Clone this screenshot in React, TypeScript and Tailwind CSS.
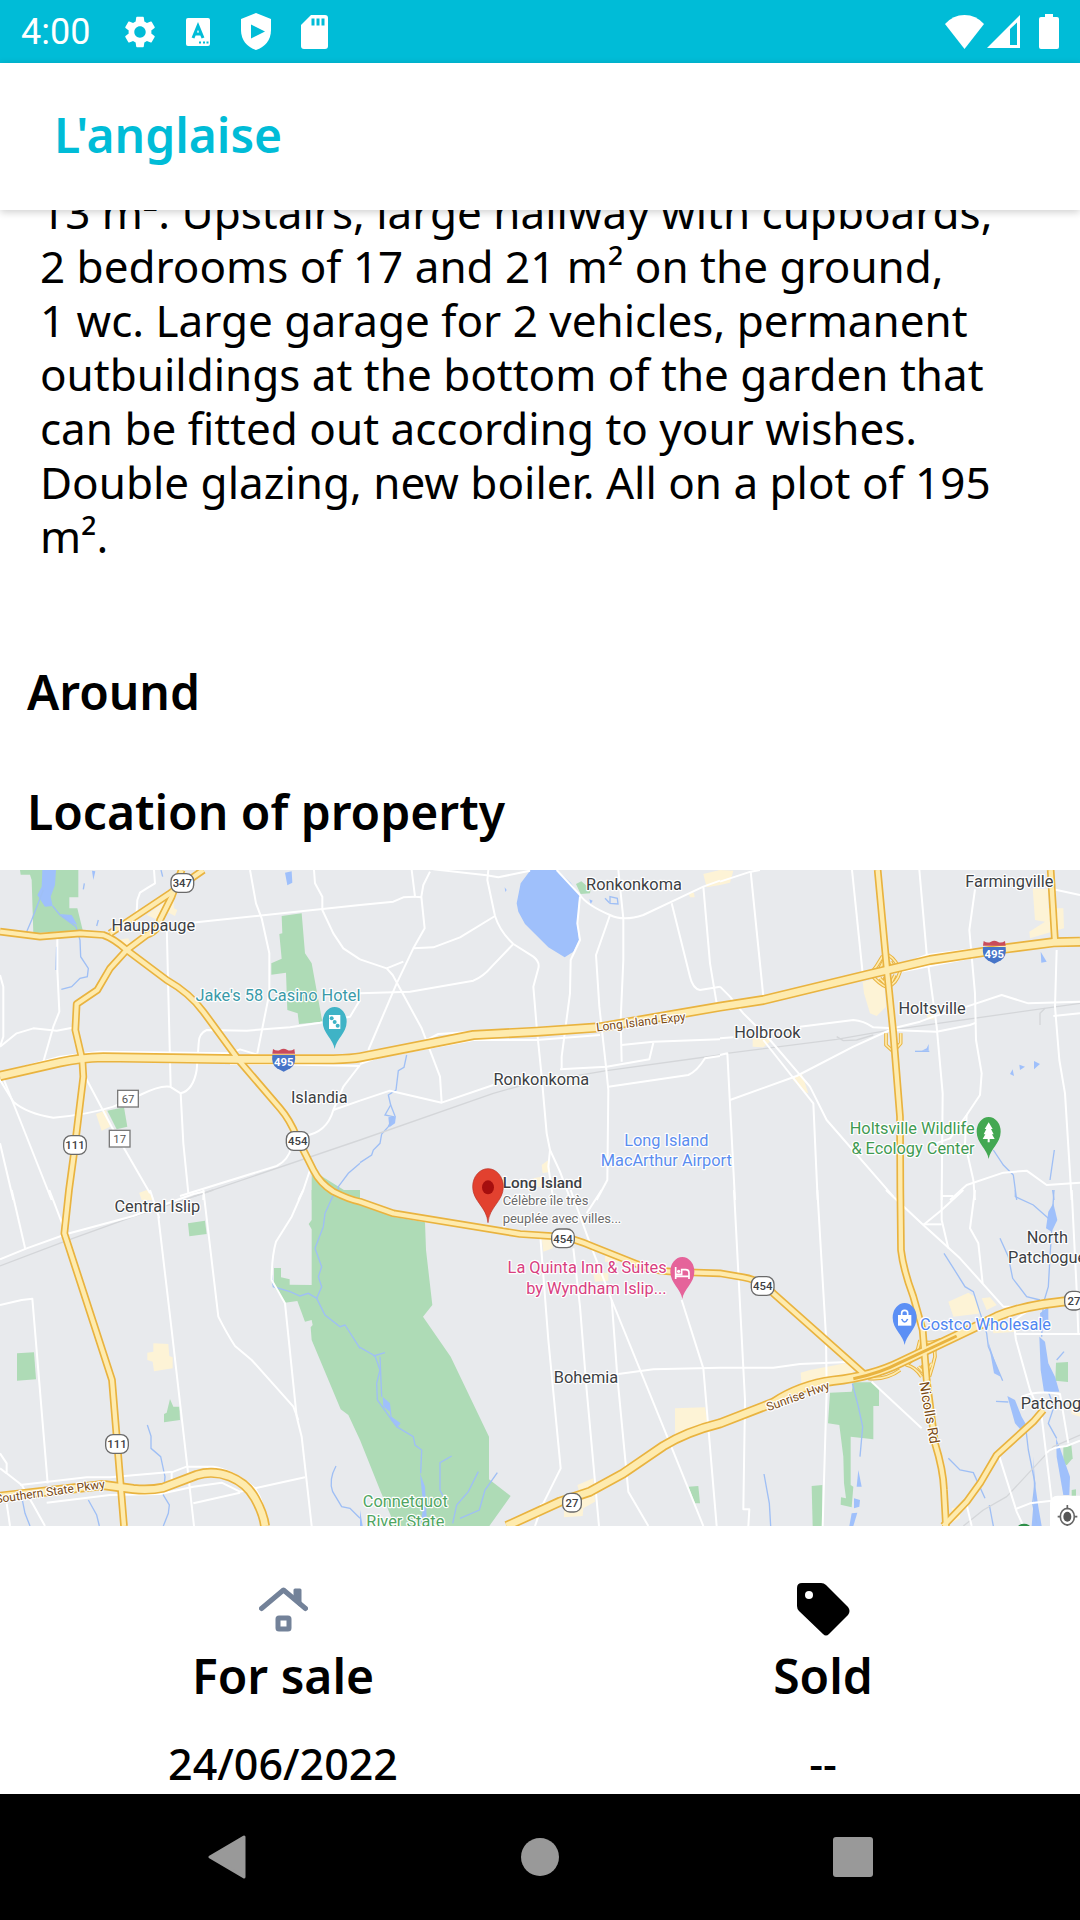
import { MdSettings } from "react-icons/md";

type Tile = {
  dx: number;
  dy: number;
  parks: string[];
  towns: string[];
  water: string[];
  streams: string[];
  rails: string[];
  roads: string[];
};

/* The map is drawn in six tiles; each tile keeps its own local coordinates. */
const tiles: Tile[] = [
  {
    dx: 0,
    dy: -30,
    parks: [
      "M60,30H235V112H208V145H232L248,210L100,220L95,60L90,44L62,44Z",
      "M845,168L905,160L915,280L935,310L967,485L897,492L893,460L862,450L858,338L814,344V310L845,296L838,222L847,220Z",
      "M322,752L372,742L382,800L350,808Z",
      "M935,930L1080,1020H935Z",
    ],
    towns: [
      "M440,165L520,105L522,145L532,150L525,168L500,155L485,185Z",
      "M288,762L318,750L330,800L305,812Z",
      "M418,1000L445,992L460,1020H425Z",
      "M350,240L385,235L400,270L370,285Z",
    ],
    water: [
      "M127,30H168L165,75L152,110L158,138L135,140L112,105L125,80Z",
      "M855,38L875,34L877,68L862,76Z",
      "M180,162L215,165L232,195L205,185Z",
      "M276,32L286,34L280,60Z",
    ],
    streams: [
      "M130,90L95,180L80,215",
      "M158,138L180,165L228,200L240,240L242,290L265,325L262,350L240,355L215,380L184,388",
      "M170,260L168,330",
      "M253,70L250,88",
      "M295,180L290,198",
      "M1080,910L1045,940L1015,980L1010,1020",
      "M483,30L488,50",
    ],
    rails: ["M580,1010L1080,840"],
    roads: [
      "M462,30L465,70L445,82L420,98L412,120L408,190",
      "M500,190L505,400L512,680",
      "M560,190L1080,135",
      "M750,30L768,130L785,175L808,280L808,400L772,580",
      "M942,30L945,70L967,110V150L1000,220L1030,265L1080,298",
      "M172,230V330L178,455L160,500L130,605",
      "M0,560L50,520L100,505L170,512L225,502",
      "M0,345L10,380V530L0,560",
      "M1080,420L1050,470L960,488L870,502L740,512L620,510Q596,520 596,550L590,630Q580,690 542,700L510,680Q480,675 420,705L340,740Q260,765 160,773Q80,760 40,725L0,660",
      "M542,700L550,850L565,1000",
      "M10,655L60,780L155,1020",
      "M0,850L40,1020",
      "M250,640L335,800L450,1000",
      "M540,1008L830,918Q865,900 875,860",
      "M1080,615L1030,680L1000,750Q980,820 910,828",
      "M1000,750L1080,722",
      "M930,930L910,990L895,1020",
      "M0,640L180,590L300,575L690,580L720,568L775,585L1080,585",
      "M690,612L800,612L1080,618",
      "M610,992V1020",
    ],
  },
  {
    dx: 1080,
    dy: -30,
    parks: ["M648,72L664,64L692,88L690,100L662,102Z"],
    towns: ["M1030,42L1080,30V75L1040,82Z", "M985,100L1002,98L1004,112H990Z", "M545,915L565,900L570,935L548,940Z", "M520,955L545,950L545,980L522,980Z"],
    water: [
      "M512,30H590L632,68L658,105L652,190L657,240L640,275L614,292L565,262L495,192L475,155L470,130L482,70Z",
      "M85,772L108,768L105,790L88,802Z",
      "M688,118L698,122L692,132Z",
      "M434,82L440,90L436,96Z",
    ],
    streams: [
      "M140,585L132,622L115,632L108,690L85,705L92,735L75,765L100,770L85,800L65,822L60,850L40,870L35,885L0,908",
      "M92,735L105,768",
      "M750,110L772,115L774,132L750,130Z",
      "M735,115L748,128",
    ],
    rails: ["M0,840L400,700L500,672L740,632L1080,585"],
    roads: [
      "M155,30L165,110L185,112",
      "M0,135L100,125L130,112L165,110",
      "M210,35L190,75L184,110L194,205L160,265L110,370L25,570",
      "M0,298L80,325L98,345L185,505L240,650L245,728",
      "M80,325L130,305",
      "M160,265L220,262L300,232L405,168",
      "M0,400L150,395L340,362Q370,350 395,320L460,252",
      "M220,28L380,46L415,52L510,32",
      "M385,30L382,60L405,168Q420,215 460,252L520,290Q540,305 535,325L520,380L530,500L545,650L560,820L570,870L600,935L632,1020",
      "M590,30L660,105Q680,135 750,165Q790,185 850,165L935,125L1030,80L1080,62",
      "M660,110L652,190L660,240L632,300L630,400L605,590V625",
      "M750,165L708,285L718,440L738,620L745,690L742,960L710,1020",
      "M790,175V300L782,480L785,605",
      "M775,30L780,80L790,175",
      "M935,130L990,350Q998,385 1020,390L1080,380",
      "M1030,80L1050,310L1070,430",
      "M0,722L90,692L245,728L400,675",
      "M600,628L740,620L868,598L880,548",
      "M785,555L880,545L1080,538",
      "M745,680L985,645Q1010,635 1035,595L1080,588",
      "M0,612L60,590L340,540L530,540L720,525",
      "M200,540L235,522L340,515",
      "M570,870L565,920L580,1020",
    ],
  },
  {
    dx: 2160,
    dy: -30,
    parks: [],
    towns: [
      "M0,30L40,32L30,68L0,75Z",
      "M938,85L985,88L985,145L1030,145L1032,205L930,235L928,215L975,185L945,180Z",
      "M428,365L490,350L498,440L470,468L450,460L432,400Z",
      "M98,530L140,530L150,545L130,562L98,560Z",
      "M215,655L245,640L265,700L250,695Z",
      "M620,462L640,460L642,478L622,478Z",
    ],
    water: [
      "M962,275L980,305L964,308Z",
      "M942,603L960,612L942,628Z",
      "M898,614L915,620L900,630Z",
      "M878,628L882,648L870,642Z",
      "M626,552V572H605L620,565Z",
    ],
    streams: ["M820,870L850,915L880,945L890,1020", "M1003,870L990,960", "M998,990L1002,1020", "M585,574H628"],
    rails: ["M20,580L350,538L500,512L1080,430", "M350,530L370,542L410,540L460,525", "M960,495V460L975,445"],
    roads: [
      "M92,35L130,410",
      "M0,65L92,35L120,30",
      "M396,30L428,340",
      "M598,30L620,280L650,500L668,700L665,1020",
      "M765,88L748,210L765,400L768,540L785,640L780,705L740,765L690,835L620,860",
      "M740,765L735,850L760,960L765,1020",
      "M1010,270L1005,440L1018,600L1035,700L1055,1020",
      "M1000,88L1080,105",
      "M0,380L30,410L70,460L150,540L270,680L320,780L520,1010",
      "M130,540L280,730L293,1020",
      "M30,720L230,648L400,560L510,510L650,515L750,495L768,488",
      "M240,500L400,480Q430,482 460,502L520,505L600,485L640,470L740,440L845,405L925,430L1080,425",
      "M1000,468L1080,460",
      "M0,535L40,532",
      "M0,585L22,580L45,1020",
      "M530,320L620,285L760,268",
      "M540,335L630,318L760,292L860,270",
      "M690,1020L740,975L850,938L920,932L980,975L1080,968",
    ],
  },
  {
    dx: 0,
    dy: 960,
    parks: [
      "M935,0H1080V750L1045,675L1022,658L935,450L932,412L938,405L935,390L915,395L892,333L855,338L822,290V234H843V262L869,268V284L935,285V118L926,102L935,90Z",
      "M564,100L615,92L620,132L568,139Z",
      "M51,490L102,487L108,568L51,572Z",
      "M510,627L520,650L538,650L540,690L492,697V672L500,668Z",
    ],
    towns: ["M460,460L505,462L508,498L518,502L518,535L462,544L458,515L442,510V488L460,485Z", "M418,8L440,0L462,25L430,30Z"],
    water: [],
    streams: [
      "M442,705L453,738V775L482,800L495,860L490,915L508,945L505,970L490,1008",
      "M1008,828Q985,870 998,905L1025,950L1050,955L1080,985",
      "M815,255L820,290L870,305L900,318L925,310L950,325L965,290L955,260L965,230L945,175L970,110L975,70L1000,15",
      "M950,325L975,375L1020,410L1035,405L1080,475",
      "M265,930L290,975L298,1008",
      "M65,920L75,970L90,1008",
    ],
    rails: ["M0,228L200,152L400,80L640,0"],
    roads: [
      "M0,208L80,175L200,132L400,78L580,12L610,5",
      "M35,0L76,178",
      "M148,0L190,110",
      "M0,345L65,330L97,326L143,880",
      "M475,80L515,420L562,830L582,1008",
      "M450,0L478,85",
      "M610,0L655,380Q680,430 705,468L755,510L880,650L895,690",
      "M910,0L875,80L828,155Q815,200 815,270L855,340L890,680L905,740L935,1008",
      "M60,885L260,862H330L520,845L560,830L640,830Q700,840 765,895Q795,940 800,1008",
      "M0,790L20,820V850L65,885L100,945L135,1008",
      "M0,835L20,850",
      "M20,940L30,1008",
      "M140,938L330,915L480,912L580,890L665,878L720,905L765,895L915,862",
      "M580,940L720,908",
      "M515,845V870",
    ],
  },
  {
    dx: 1080,
    dy: 960,
    parks: [
      "M0,45L100,80L195,97L198,180L217,345L189,380L272,500L387,740V868L452,918L388,1008H105L60,900L0,750Z",
      "M985,890L1015,888L1020,940L1005,940Z",
    ],
    towns: [
      "M945,655L1035,652L1045,705L945,735Z",
      "M652,885L700,865L705,935L670,955L668,978L612,982V945L660,915Z",
      "M545,145H578V175L550,185Z",
      "M700,250L745,248V272L705,275Z",
      "M735,195L775,200L775,218L735,215Z",
    ],
    water: ["M68,620L90,640L95,680L122,700L112,712L92,690L90,665L70,650Z", "M180,850L195,890L200,980L215,1008H180L190,950Z", "M0,960L8,1008H0Z"],
    streams: [
      "M0,472L45,498L60,540L50,580L52,630L110,710L160,740L165,765L185,780L182,850",
      "M40,498L75,488",
      "M275,798L240,818L240,900L250,920",
      "M355,845L325,905L290,945L278,1000",
      "M412,848L375,900L358,960L300,985",
      "M60,500L65,620",
    ],
    rails: [],
    roads: [
      "M541,140L565,450L602,835L545,950L525,1008",
      "M640,175L660,350L680,600L717,1008",
      "M755,330L772,560L805,905L865,1008",
      "M632,0L690,160L755,330L925,748L940,785L1030,1008",
      "M725,0L680,70",
      "M775,552L880,538L1080,533",
      "M965,330L1030,535L1070,1008",
      "M540,945L600,930",
    ],
  },
  {
    dx: 2160,
    dy: 960,
    parks: [
      "M400,577H460L477,600V648H460V748L392,740V885L400,890L395,952L362,944L363,922L378,925L372,880L370,800L358,705L324,700L330,608L395,605Z",
      "M275,888L307,885V1008H278Z",
      "M1008,518L1044,516V576L1006,572Z",
      "M1030,768L1054,765L1058,805L1040,826L1030,820Z",
      "M1055,900L1068,898V925L1055,925Z",
    ],
    towns: [
      "M685,335L745,308L765,320L785,370L700,380Z",
      "M785,325L810,322L830,345L800,360Z",
      "M242,548L270,540L400,515V555L245,590Z",
      "M1050,640L1080,625V680L1055,672Z",
      "M695,955L720,950V985L700,995Z",
      "M815,400L890,395V425L820,430Z",
    ],
    water: [
      "M1000,40L1012,90L995,125L978,115L985,65Z",
      "M958,440L975,455L985,520L1005,560L1018,605L972,605L962,540Z",
      "M862,618L885,630L905,680L922,710L905,722L885,700Z",
      "M1008,745L1020,775L1050,860L1048,915H1030L1010,800Z",
      "M805,455L825,515L842,560L822,550Z",
      "M940,800L945,880L955,950L965,1008H935L942,920Z",
      "M960,370L985,350L985,400L965,420Z",
      "M415,840L425,890H410Z",
      "M402,925L420,930L418,950L402,955Z",
      "M395,970L412,968L400,1008H388Z",
    ],
    streams: [
      "M672,190L710,250L735,290L760,305L800,430L805,470L848,572",
      "M886,0V20L940,45L985,85",
      "M1002,0L998,60",
      "M995,120L990,200L985,290L970,340L965,440",
      "M840,145L865,200L878,265L920,320L960,330",
      "M828,634L865,636",
      "M918,720L925,780L945,880L938,940L950,1000",
      "M985,605L1002,650L985,700L1010,745",
      "M397,580L415,650L428,710L420,800",
      "M685,805L720,840L760,848L795,925",
      "M808,945L820,1008",
      "M132,852L148,940L152,1008",
      "M1010,510L1032,485",
    ],
    rails: ["M730,1008L790,960L860,920L925,850L1000,770L1080,735"],
    roads: [
      "M42,0L75,630L70,958H88L85,1008",
      "M292,0L318,440L320,600L308,1008",
      "M0,533H160L240,522L400,515",
      "M498,0L610,105L720,205L850,350L905,350",
      "M610,105L665,60L730,0",
      "M665,0V90L685,175",
      "M665,18H700",
      "M610,103H665",
      "M765,0L750,115L775,160L788,280",
      "M1055,0L1070,300L1075,430",
      "M885,432H1080",
      "M880,390L888,450L930,600L965,680L995,930",
      "M455,575L605,715",
      "M905,620Q950,600 1020,612L1045,760",
      "M980,790Q990,772 1040,768L1080,752",
      "M835,790L890,965L910,1008",
      "M885,958L930,940L995,932",
      "M740,945L755,1008",
      "M870,400L905,375L930,360",
    ],
  },
];

const highways: { d: string; wide?: boolean }[] = [
  { d: "M330,190L510,70L610,0" },
  { d: "M545,0L515,80L480,150Q478,180 440,195L380,240L330,295L292,360L230,402L226,480L247,570L250,620L222,850L207,960L193,1090L336,1530L350,1700L372,1968" },
  { d: "M0,185L120,200L240,190L310,195Q340,205 380,240L500,330Q570,370 610,425L720,575L840,715Q870,750 890,800L940,900Q960,940 1000,965Q1050,990 1080,995L1180,1030L1560,1092L1680,1100Q1720,1105 1780,1130L1910,1182Q1960,1205 2040,1206L2160,1210L2230,1222Q2280,1230 2320,1270L2590,1510" },
  { d: "M2633,0L2660,290L2680,490L2700,740L2701,960L2703,1140Q2710,1200 2740,1280L2768,1380L2780,1530L2805,1720Q2830,1800 2832,1860L2838,1968" },
  { d: "M3152,0L3165,215" },
  { d: "M2830,1968L2900,1895L2940,1840L2990,1755L3100,1655L3130,1620" },
  { d: "M0,1880L310,1845L400,1857Q450,1862 490,1853L590,1815Q640,1800 690,1820Q740,1840 765,1885Q790,1930 795,1968", wide: true },
  { d: "M1520,1968L1680,1895L1770,1865L1870,1810L1990,1728Q2060,1685 2160,1660L2320,1598Q2400,1545 2500,1532Q2620,1518 2700,1478L2990,1340Q3080,1302 3240,1290", wide: true },
  { d: "M0,618L180,577Q240,564 310,562L720,568L1000,568Q1060,566 1080,562L1420,495L1610,485L1800,472L2160,410L2290,390L2600,315L2790,270L3020,235L3160,217L3240,215", wide: true },
];

/* Ramps of the junctions. */
const ramps = [
  "M2648,258Q2630,290 2612,312Q2640,345 2662,352Q2690,340 2700,305Q2690,270 2665,255",
  "M2640,295L2650,275V300M2672,275L2682,295M2640,325L2655,340V320M2675,335L2685,315",
  "M2658,490V525L2680,545L2702,520V490",
  "M2760,1410Q2750,1465 2720,1485Q2745,1490 2765,1520M2760,1412Q2790,1425 2820,1410Q2800,1430 2805,1460Q2798,1490 2788,1520",
  "M2765,1440L2775,1430V1455M2785,1435H2795V1445M2755,1490L2768,1505V1485M2785,1500L2795,1480",
  "M2605,1525Q2660,1530 2700,1500",
];

type Label = { x: number; y: number; t: string; c: string; s?: string; anchor?: "start" | "middle" | "end"; rotate?: number };

const DARK = "fill-[#3c4043]";
const labels: Label[] = [
  { x: 460, y: 182, t: "Hauppauge", c: DARK },
  { x: 958, y: 698, t: "Islandia", c: DARK },
  { x: 472, y: 1025, t: "Central Islip", c: DARK },
  { x: 1902, y: 60, t: "Ronkonkoma", c: DARK },
  { x: 1624, y: 646, t: "Ronkonkoma", c: DARK },
  { x: 3028, y: 50, t: "Farmingville", c: DARK },
  { x: 2796, y: 433, t: "Holtsville", c: DARK },
  { x: 2302, y: 504, t: "Holbrook", c: DARK },
  { x: 1758, y: 1540, t: "Bohemia", c: DARK },
  { x: 3142, y: 1118, t: "North", c: DARK },
  { x: 3024, y: 1180, t: "Patchogue", c: DARK, anchor: "start" },
  { x: 3062, y: 1618, t: "Patchogue", c: DARK, anchor: "start" },
  { x: 834, y: 392, t: "Jake's 58 Casino Hotel", c: "fill-[#3a9aa8]" },
  { x: 1999, y: 827, t: "Long Island", c: "fill-[#5b8def]" },
  { x: 1999, y: 888, t: "MacArthur Airport", c: "fill-[#5b8def]" },
  { x: 2924, y: 792, t: "Holtsville Wildlife", c: "fill-[#3f9a52]", anchor: "end" },
  { x: 2924, y: 852, t: "& Ecology Center", c: "fill-[#3f9a52]", anchor: "end" },
  { x: 2000, y: 1210, t: "La Quinta Inn & Suites", c: "fill-[#d8407f]", anchor: "end" },
  { x: 2000, y: 1272, t: "by Wyndham Islip...", c: "fill-[#d8407f]", anchor: "end" },
  { x: 2760, y: 1380, t: "Costco Wholesale", c: "fill-[#4f86f0]", anchor: "start" },
  { x: 1216, y: 1911, t: "Connetquot", c: "fill-[#4fa562]" },
  { x: 1216, y: 1970, t: "River State", c: "fill-[#4fa562]" },
  { x: 1508, y: 953, t: "Long Island", c: "fill-[#3c4043] font-medium", s: "text-[46px]", anchor: "start" },
  { x: 1508, y: 1004, t: "Célèbre île très", c: "fill-[#6b6b6b]", s: "text-[39px]", anchor: "start" },
  { x: 1508, y: 1058, t: "peuplée avec villes...", c: "fill-[#6b6b6b]", s: "text-[39px]", anchor: "start" },
  { x: 1924, y: 468, t: "Long Island Expy", c: "fill-[#7a4a12]", s: "text-[36px]", rotate: -7 },
  { x: 2398, y: 1590, t: "Sunrise Hwy", c: "fill-[#7a4a12]", s: "text-[36px]", rotate: -20 },
  { x: 2774, y: 1630, t: "Nicolls Rd", c: "fill-[#7a4a12]", s: "text-[42px]", rotate: 80 },
  { x: -12, y: 1900, t: "Southern State Pkwy", c: "fill-[#7a4a12]", s: "text-[36px]", anchor: "start", rotate: -8 },
];

const shields = [
  { x: 547, y: 39, t: "347" },
  { x: 225, y: 825, t: "111" },
  { x: 351, y: 1722, t: "111" },
  { x: 893, y: 813, t: "454" },
  { x: 1689, y: 1105, t: "454" },
  { x: 2288, y: 1248, t: "454" },
  { x: 1716, y: 1898, t: "27" },
  { x: 3222, y: 1292, t: "27" },
];

function Interstate({ x, y }: { x: number; y: number }) {
  return (
    <g transform={`translate(${x} ${y})`}>
      <path d="M-32,-34Q-20,-26 -10,-32Q0,-38 10,-32Q20,-26 32,-34L34,-20H-34Z" fill="#c94b5a" />
      <path d="M-34,-16H34Q38,12 20,24L0,34L-20,24Q-38,12 -34,-16Z" fill="#4674c8" />
      <text y="17" textAnchor="middle" className="fill-white text-[34px] font-bold">495</text>
    </g>
  );
}

function Pin({ x, y, color, children }: { x: number; y: number; color: string; children: React.ReactNode }) {
  return (
    <g transform={`translate(${x} ${y})`}>
      <path d="M0,0C-4,-30 -36,-48 -36,-82A36,44 0 0 1 36,-82C36,-48 4,-30 0,0Z" fill={color} />
      {children}
    </g>
  );
}

function LocationMap() {
  return (
    <svg viewBox="0 0 3240 1968" role="img" aria-label="Map of Long Island" className="block w-full font-['Roboto',sans-serif]">
      <rect width="3240" height="1968" fill="#e8eaed" />
      {tiles.map((t, i) => (
        <g key={i} transform={`translate(${t.dx} ${t.dy})`}>
          {t.parks.map((d) => <path key={d} d={d} fill="#aedbb6" />)}
          {t.towns.map((d) => <path key={d} d={d} fill="#fdf3d6" />)}
          {t.water.map((d) => <path key={d} d={d} fill="#9fc0fb" />)}
          {t.streams.map((d) => <path key={d} d={d} fill="none" stroke="#9fbff5" strokeWidth="4" />)}
        </g>
      ))}
      {tiles.map((t, i) => (
        <g key={i} transform={`translate(${t.dx} ${t.dy})`} fill="none" strokeLinejoin="round">
          {t.rails.map((d) => <path key={d} d={d} stroke="#d4d6d9" strokeWidth="4" />)}
          {t.roads.map((d) => <path key={d} d={d} stroke="#ffffff" strokeWidth="6" />)}
        </g>
      ))}
      <g fill="none" strokeLinejoin="round">
        {ramps.map((d) => <path key={d} d={d} stroke="#e9b33f" strokeWidth="11" />)}
        {ramps.map((d) => <path key={d} d={d} stroke="#feebae" strokeWidth="5" />)}
        {highways.map((h) => <path key={h.d} d={h.d} stroke="#e9b33f" strokeWidth={h.wide ? 30 : 23} />)}
        {highways.map((h) => <path key={h.d} d={h.d} stroke="#feebae" strokeWidth={h.wide ? 20 : 13} />)}
        <path d="M2560,1526Q2640,1510 2700,1478L2870,1398" stroke="#e9b33f" strokeWidth="9" />
      </g>

      {shields.map((s) => (
        <g key={`${s.x}-${s.y}`} transform={`translate(${s.x} ${s.y})`}>
          <rect x={s.t.length > 2 ? -34 : -28} y="-28" width={s.t.length > 2 ? 68 : 56} height="56" rx="22" fill="#fff" stroke="#6a6a6a" strokeWidth="4" />
          <text y="13" textAnchor="middle" className="fill-[#3c4043] text-[34px] font-medium">{s.t}</text>
        </g>
      ))}
      {[{ x: 384, y: 686, t: "67" }, { x: 359, y: 806, t: "17" }].map((s) => (
        <g key={s.t} transform={`translate(${s.x} ${s.y})`}>
          <rect x="-31" y="-25" width="62" height="50" fill="#fff" stroke="#7a7a7a" strokeWidth="4" />
          <text y="13" textAnchor="middle" className="fill-[#555555] text-[34px]">{s.t}</text>
        </g>
      ))}
      <Interstate x={851} y={571} />
      <Interstate x={2983} y={247} />

      <g stroke="#ffffff" strokeWidth="7" strokeLinejoin="round" className="[paint-order:stroke]">
        {labels.map((l) => (
          <text
            key={`${l.t}-${l.y}`}
            x={l.x}
            y={l.y}
            textAnchor={l.anchor ?? "middle"}
            transform={l.rotate ? `rotate(${l.rotate} ${l.x} ${l.y})` : undefined}
            className={`${l.c} ${l.s ?? "text-[49px]"}`}
          >
            {l.t}
          </text>
        ))}
      </g>

      <Pin x={1004} y={537} color="#3fb3c6">
        <rect x="-17" y="-102" width="34" height="42" fill="#fff" />
        <circle cx="-9" cy="-92" r="6" fill="#3fb3c6" />
        <circle cx="0" cy="-81" r="6" fill="#3fb3c6" />
        <circle cx="9" cy="-70" r="6" fill="#3fb3c6" />
      </Pin>
      <Pin x={2966} y={867} color="#43a852">
        <path d="M0,-110L12,-90H7L15,-74H10L18,-60H3V-50H-3V-60H-18L-10,-74H-15L-7,-90H-12Z" fill="#fff" />
      </Pin>
      <Pin x={2047} y={1287} color="#e5639a">
        <path d="M-20,-96V-60M-20,-68H20M20,-60V-78Q20,-88 10,-88H-2V-74H-20" fill="none" stroke="#fff" strokeWidth="5" />
        <circle cx="-11" cy="-83" r="5" fill="#fff" />
      </Pin>
      <Pin x={2714} y={1425} color="#5b8ff5">
        <path d="M-20,-90H20V-58H-20Z" fill="#fff" />
        <path d="M-9,-88V-96Q-9,-104 0,-104Q9,-104 9,-96V-88" fill="none" stroke="#fff" strokeWidth="5" />
        <path d="M-9,-78Q0,-60 9,-78" fill="none" stroke="#5b8ff5" strokeWidth="5" />
      </Pin>
      <g transform="translate(1464 1058)">
        <path d="M0,0C-4,-48 -46,-64 -46,-108A46,54 0 0 1 46,-108C46,-64 4,-48 0,0Z" fill="#e2412f" stroke="#b93024" strokeWidth="2" />
        <ellipse cx="0" cy="-106" rx="18" ry="21" fill="#a50e0e" />
      </g>

      <ellipse cx="3072" cy="1975" rx="20" ry="14" fill="#2f8f4a" />
      <rect x="3150" y="1877" width="130" height="130" rx="22" fill="#fff" />
      <g stroke="#666666" fill="none" strokeWidth="5">
        <ellipse cx="3202" cy="1940" rx="21" ry="25" />
        <path d="M3202,1905V1918M3202,1962V1968M3173,1940H3182M3222,1940H3232" />
      </g>
      <ellipse cx="3202" cy="1940" rx="12" ry="15" fill="#555555" />
    </svg>
  );
}

function StatusBar() {
  return (
    <div className="flex h-[63px] shrink-0 items-center justify-between bg-[#00bcd7] pr-[21px] pl-[21px] text-white">
      <div className="flex items-center">
        <span className="w-[100px] font-['Roboto',sans-serif] text-[36px] leading-[66px]">4:00</span>
        <MdSettings size={38} aria-hidden="true" />
        <svg width="24" height="28" viewBox="0 0 24 28" className="ml-[27px]" aria-hidden="true">
          <rect width="24" height="28" rx="2" fill="currentColor" />
          <path d="M7,20L12,8L17,20M9,16H15" fill="none" stroke="#00bcd7" strokeWidth="3" />
          <path d="M13,24.500H15M17,24.500H19M20.500,24.500H22.500" stroke="#00bcd7" strokeWidth="2" />
        </svg>
        <svg width="30" height="37" viewBox="0 0 30 37" className="ml-[31px]" aria-hidden="true">
          <path d="M15,0L30,6V17C30,27 24,34 15,37C6,34 0,27 0,17V6Z" fill="currentColor" />
          <path d="M10,11.500L24,18.500L10,25.500Z" fill="#00bcd7" />
        </svg>
        <svg width="27" height="34" viewBox="0 0 27 34" className="ml-[30px]" aria-hidden="true">
          <path d="M10,0H24Q27,0 27,3V31Q27,34 24,34H3Q0,34 0,31V10Z" fill="currentColor" />
          <path d="M10.500,3.500H13.500V10.500H10.500ZM15.500,3.500H18.500V10.500H15.500ZM20.500,3.500H23.500V10.500H20.500Z" fill="#00bcd7" />
        </svg>
      </div>
      <div className="flex items-center">
        <svg width="39" height="34" viewBox="0 0 39 34" aria-hidden="true">
          <path d="M0,9Q8,0 19.500,0Q31,0 39,9L19.500,34Z" fill="currentColor" />
        </svg>
        <svg width="33" height="33" viewBox="0 0 33 33" className="ml-[3px]" aria-hidden="true">
          <path d="M33,0V33H0Z" fill="currentColor" />
          <path d="M23,14L30,7.500V30H23Z" fill="#00bcd7" />
        </svg>
        <svg width="20" height="35" viewBox="0 0 20 35" className="ml-[19px]" aria-hidden="true">
          <path d="M6,0H14V3H18Q20,3 20,5V33Q20,35 18,35H2Q0,35 0,33V5Q0,3 2,3H6Z" fill="currentColor" />
        </svg>
      </div>
    </div>
  );
}

function HouseIcon() {
  return (
    <svg width="49" height="45" viewBox="0 0 49 45" aria-hidden="true">
      <path d="M2.500,21.500L24.500,3L46.500,21.500" fill="none" stroke="#738299" strokeWidth="5" strokeLinecap="round" strokeLinejoin="round" />
      <path d="M36,3H41V18L36,13Z" fill="#738299" stroke="#738299" strokeWidth="3" strokeLinejoin="round" />
      <rect x="19" y="31" width="11" height="11" rx="1" fill="none" stroke="#738299" strokeWidth="5" />
    </svg>
  );
}

function TagIcon() {
  return (
    <svg width="53" height="53" viewBox="0 0 53 53" aria-hidden="true">
      <path d="M5,0H24Q27,0 29,2L51,24Q54,28 51,32L32,51Q29,54 26,51L2,28Q0,26 0,23V5Q0,0 5,0Z" fill="#000" />
      <circle cx="12" cy="12" r="4" fill="#fff" />
    </svg>
  );
}

function StatusColumn({ icon, title, value }: { icon: React.ReactNode; title: string; value: string }) {
  return (
    <div className="flex flex-col items-center pl-[26px]">
      <div className="flex h-[54px] items-center">{icon}</div>
      <h3 className="mt-[6px] text-[48px] leading-[68px] font-semibold">{title}</h3>
      <p className="mt-[22px] text-[43px] leading-[64px] font-medium">{value}</p>
    </div>
  );
}

export default function App() {
  return (
    <div className="flex h-screen flex-col overflow-hidden bg-white font-['Noto_Sans',sans-serif] text-black">
      <StatusBar />
      <header className="z-10 flex h-[147px] shrink-0 items-center bg-white px-[54px] pb-1 shadow-[0_2px_8px_rgba(0,0,0,0.2)]">
        <h1 className="text-[48px] leading-[68px] font-semibold text-[#00bcd7]">L'anglaise</h1>
      </header>
      <main className="min-h-0 flex-1 overflow-hidden">
        <p className="-mt-[25px] px-10 text-[44px] leading-[54px]">
          13 m². Upstairs, large hallway with cupboards,
          <br />2 bedrooms of 17 and 21 m² on the ground,
          <br />1 wc. Large garage for 2 vehicles, permanent outbuildings at the bottom of the garden that can be fitted out according to your wishes. Double glazing, new boiler. All on a plot of 195 m².
        </p>
        <h2 className="mt-[95px] px-[27px] text-[48px] leading-[68px] font-semibold">Around</h2>
        <h2 className="mt-[52px] mb-6 px-[27px] text-[48px] leading-[68px] font-semibold">Location of property</h2>
        <LocationMap />
        <div className="grid grid-cols-2 pt-14">
          <StatusColumn icon={<HouseIcon />} title="For sale" value="24/06/2022" />
          <StatusColumn icon={<TagIcon />} title="Sold" value="--" />
        </div>
      </main>
      <nav className="flex h-[126px] shrink-0 items-center justify-center bg-black">
        <button aria-label="Back" className="flex w-[29%] justify-center">
          <svg width="38" height="44" viewBox="0 0 38 44" aria-hidden="true">
            <path d="M36,2V42L2,22Z" fill="#999" stroke="#999" strokeWidth="3" strokeLinejoin="round" />
          </svg>
        </button>
        <button aria-label="Home" className="flex w-[29%] justify-center">
          <span className="size-[38px] rounded-full bg-[#999999]" />
        </button>
        <button aria-label="Recent apps" className="flex w-[29%] justify-center">
          <span className="size-10 rounded-[3px] bg-[#999999]" />
        </button>
      </nav>
    </div>
  );
}
